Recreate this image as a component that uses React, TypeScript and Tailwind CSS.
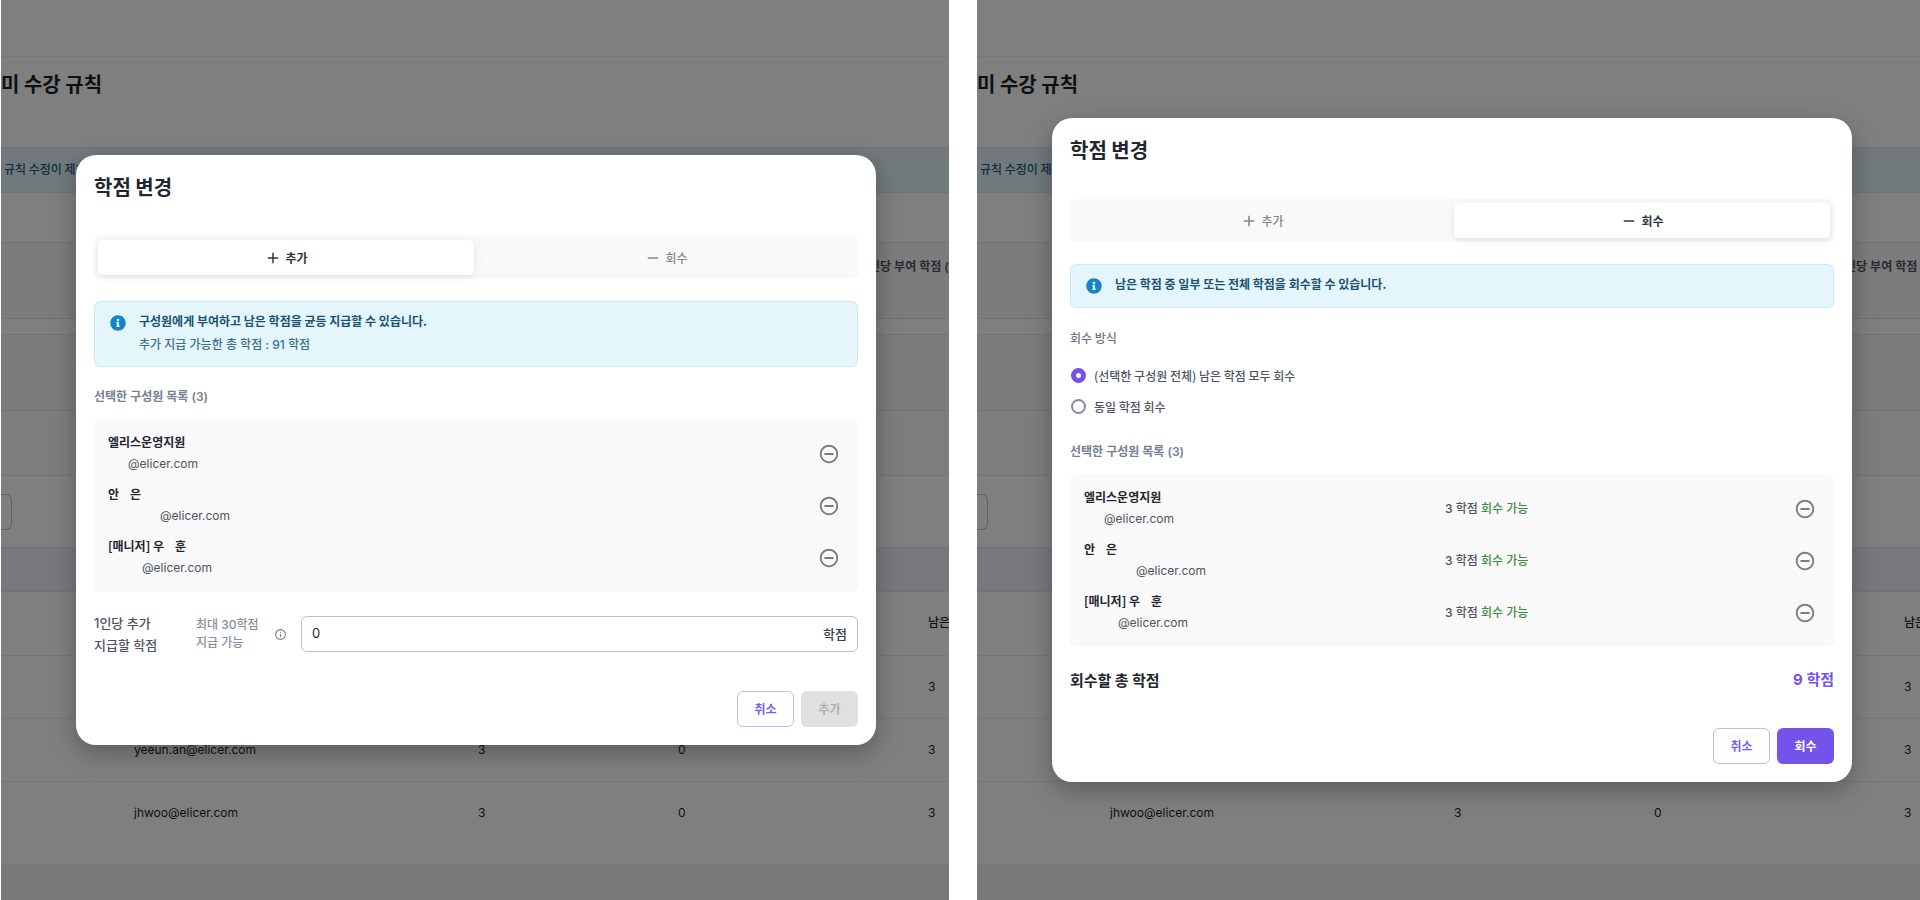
import { useState } from 'react';
import type { ReactNode } from 'react';
import { FaInfoCircle } from 'react-icons/fa';
import {
  MdAdd,
  MdInfoOutline,
  MdRemove,
  MdRemoveCircleOutline,
} from 'react-icons/md';
import clsx from 'clsx';

type Mode = 'add' | 'reclaim';

interface IMember {
  id: string;
  name: [string, string?];
  emailIndent: string;
  credit: number;
}

// * Data
const members: IMember[] = [
  { id: 'support', name: ['엘리스운영지원'], emailIndent: 'pl-5', credit: 3 },
  { id: 'an', name: ['안', '은'], emailIndent: 'pl-[52px]', credit: 3 },
  { id: 'woo', name: ['[매니저] 우', '훈'], emailIndent: 'pl-[34px]', credit: 3 },
];

const rows = [
  { id: 1, email: '', given: '', used: '', left: '3' },
  { id: 2, email: 'yeeun.an@elicer.com', given: '3', used: '0', left: '3' },
  { id: 3, email: 'jhwoo@elicer.com', given: '3', used: '0', left: '3' },
];

const korean = "font-['Noto_Sans_CJK_KR',sans-serif]";

// * Page under the dialog
function RulePage() {
  return (
    <div className="flex min-h-screen flex-col bg-white text-xs text-[#1b1f2a]">
      <header className="h-[57px] border-b border-[#f0f0f0]" />

      <h1
        className={clsx('mt-[11px] text-xl leading-8 font-bold whitespace-nowrap', korean)}
      >
        미 수강 규칙
      </h1>

      <p
        className={clsx(
          'mt-[47px] h-[46px] border-y border-[#d2eaf3] bg-[#e2f3f8] pl-[3px] leading-[42px] font-medium whitespace-nowrap text-[#1d5a7c]',
          korean
        )}
      >
        규칙 수정이 제한
      </p>

      <div className="mt-[49px] h-[77px] border-y border-[#e6e6e6] bg-[#f8f8f8] pt-3.5 pl-[868px] leading-5 font-semibold whitespace-nowrap text-[#4d5666]">
        인당 부여 학점 (
      </div>
      <div className="mt-[15px] h-[77px] border-y border-[#e6e6e6] bg-[#f8f8f8]" />
      <div className="h-[65px] border-b border-[#e9e9e9] bg-[#fbfbfb]" />
      <div className="flex h-[71px] items-center">
        <div className="h-9 w-[11px] rounded-r-md border border-l-0 border-[#c4c4c4]" />
      </div>
      <div className="h-[45px] border-y border-[#e6e3ee] bg-[#f1eef9]" />

      <table className="w-full table-fixed text-left">
        <colgroup>
          <col className="w-[133px]" />
          <col className="w-[344px]" />
          <col className="w-[200px]" />
          <col className="w-[250px]" />
          <col />
        </colgroup>
        <thead>
          <tr className="h-[63px] border-b border-[#ececec]">
            <th />
            <th />
            <th />
            <th />
            <th className="overflow-hidden font-medium whitespace-nowrap">남은</th>
          </tr>
        </thead>
        <tbody>
          {rows.map((row) => (
            <tr
              key={row.id}
              className="h-[63px] border-b border-[#ececec] last:border-0"
            >
              <td />
              <td>{row.email}</td>
              <td>{row.given}</td>
              <td>{row.used}</td>
              <td>{row.left}</td>
            </tr>
          ))}
        </tbody>
      </table>

      <div className="mt-5 flex-1 bg-[#eff0f3]" />
    </div>
  );
}

// * Dialog parts
function ModeTabs({ mode, onChange }: { mode: Mode; onChange: (m: Mode) => void }) {
  const tabs: { id: Mode; label: string; icon: ReactNode }[] = [
    { id: 'add', label: '추가', icon: <MdAdd size={18} /> },
    { id: 'reclaim', label: '회수', icon: <MdRemove size={18} /> },
  ];

  return (
    <div className="mt-[35px] grid h-[43px] grid-cols-2 gap-1 rounded-md bg-[#f9f9f9] p-1">
      {tabs.map((tab) => (
        <button
          key={tab.id}
          type="button"
          aria-pressed={mode === tab.id}
          onClick={() => onChange(tab.id)}
          className={clsx(
            'flex items-center justify-center gap-[3px] rounded-[5px]',
            korean,
            mode === tab.id
              ? 'bg-white font-bold text-[#2f3440] shadow-[0_2px_4px_rgba(0,0,0,0.06),0_2px_16px_rgba(0,0,0,0.05)]'
              : 'font-medium text-[#858585]'
          )}
        >
          {tab.icon}
          {tab.label}
        </button>
      ))}
    </div>
  );
}

function Notice({ title, children }: { title: string; children?: ReactNode }) {
  return (
    <div className="mt-[22px] flex gap-[13px] rounded-md border border-[#ccebf8] bg-[#e4f5fc] pt-2 pr-4 pb-3 pl-[15px] leading-[22px] text-[#1a5273]">
      <FaInfoCircle size={16} className="mt-[5px] shrink-0 text-[#1684c7]" />
      <div>
        <p className={clsx('font-bold', korean)}>{title}</p>
        {children}
      </div>
    </div>
  );
}

function MemberList({ showCredit }: { showCredit?: boolean }) {
  return (
    <>
      <h3 className="mt-5 leading-5 font-semibold text-[#77808e]">
        선택한 구성원 목록 ({members.length})
      </h3>
      <ul className="mt-[13px] rounded-md bg-[#f9f9f9] py-2 pr-[18px] pl-3.5">
        {members.map((member) => (
          <li key={member.id} className="flex h-[52px] items-center">
            <div className="w-[361px] pb-0.5 leading-[22px]">
              <p className={clsx('flex gap-[11px] font-bold', korean)}>
                <span>{member.name[0]}</span>
                {member.name[1] && <span>{member.name[1]}</span>}
              </p>
              <p className={clsx('text-[#4d5562]', member.emailIndent)}>
                @elicer.com
              </p>
            </div>
            {showCredit && (
              <p className="font-medium text-[#4d5562]">
                {member.credit} 학점 <span className="text-[#3f8b45]">회수 가능</span>
              </p>
            )}
            <button
              type="button"
              aria-label="제외"
              className="ml-auto text-[#7c7c7c]"
            >
              <MdRemoveCircleOutline size={22} />
            </button>
          </li>
        ))}
      </ul>
    </>
  );
}

function AddBody() {
  return (
    <>
      <Notice title="구성원에게 부여하고 남은 학점을 균등 지급할 수 있습니다.">
        <p className="mt-0.5 -mb-0.5 font-medium text-[#3d7089]">
          추가 지급 가능한 총 학점 : 91 학점
        </p>
      </Notice>
      <MemberList />
      <div className="mt-5 flex items-center">
        <label
          htmlFor="credit"
          className="w-[102px] text-[13px] leading-[22px] font-medium text-[#4d5562]"
        >
          1인당 추가
          <br />
          지급할 학점
        </label>
        <p className="w-[78px] leading-[18px] font-medium text-[#868f9d]">
          최대 30학점
          <br />
          지급 가능
        </p>
        <MdInfoOutline size={13} className="text-[#7a8494]" />
        <div className="ml-3.5 flex h-9 flex-1 items-center rounded-md border border-[#c0c0c0] px-2.5 text-[13px]">
          <input
            id="credit"
            type="text"
            inputMode="numeric"
            defaultValue="0"
            className="min-w-0 flex-1 outline-none"
          />
          <span className={clsx('font-medium text-[#373d49]', korean)}>학점</span>
        </div>
      </div>
    </>
  );
}

function ReclaimBody() {
  return (
    <>
      <Notice title="남은 학점 중 일부 또는 전체 학점을 회수할 수 있습니다." />
      <fieldset className={clsx('mt-5 font-medium text-[#4d5562]', korean)}>
        <legend className="mb-3 leading-5 text-[#6b7483]">회수 방식</legend>
        {['(선택한 구성원 전체) 남은 학점 모두 회수', '동일 학점 회수'].map(
          (label, i) => (
            <label key={label} className="flex h-[31px] items-center gap-2 pl-px">
              <input
                type="radio"
                name="method"
                defaultChecked={i === 0}
                className="size-[15px] appearance-none rounded-full border-2 border-[#868d99] bg-white checked:border-[5px] checked:border-[#7353ea]"
              />
              {label}
            </label>
          )
        )}
      </fieldset>
      <MemberList showCredit />
      <div className="mt-[21px] flex justify-between pb-px text-[15px] leading-6 font-bold">
        <h3 className={korean}>회수할 총 학점</h3>
        <p className="text-[#7353ea]">9 학점</p>
      </div>
    </>
  );
}

function CreditScreen({ initialMode }: { initialMode: Mode }) {
  // * State
  const [mode, setMode] = useState<Mode>(initialMode);

  return (
    <section className="relative min-w-0 overflow-hidden">
      <RulePage />

      {/* Backdrop */}
      <div className="absolute inset-0 flex items-center bg-black/50 pl-[75px]">
        {/* Dialog */}
        <div
          role="dialog"
          aria-label="학점 변경"
          className="w-full max-w-[800px] rounded-[20px] bg-white p-[18px] text-xs text-[#22262f] shadow-[0_8px_24px_rgba(0,0,0,0.28)]"
        >
          <h2 className={clsx('text-xl leading-7 font-bold', korean)}>학점 변경</h2>
          <ModeTabs mode={mode} onChange={setMode} />
          {mode === 'add' ? <AddBody /> : <ReclaimBody />}

          {/* Actions */}
          <div
            className={clsx('mt-[35px] flex justify-end gap-[7px] font-bold', korean)}
          >
            <button
              type="button"
              className="h-9 w-[57px] rounded-md border border-[#c4b6f8] text-[#7b5cf0]"
            >
              취소
            </button>
            <button
              type="button"
              disabled={mode === 'add'}
              className="h-9 w-[57px] rounded-md bg-[#7353ea] text-white disabled:bg-[#e0e0e0] disabled:text-[#b0b0b0]"
            >
              {mode === 'add' ? '추가' : '회수'}
            </button>
          </div>
        </div>
      </div>
    </section>
  );
}

export default function App() {
  return (
    <main className="grid min-h-screen grid-cols-[948fr_943fr] gap-7 bg-white pl-px font-['Inter','Noto_Sans_CJK_KR',sans-serif]">
      <CreditScreen initialMode="add" />
      <CreditScreen initialMode="reclaim" />
    </main>
  );
}
